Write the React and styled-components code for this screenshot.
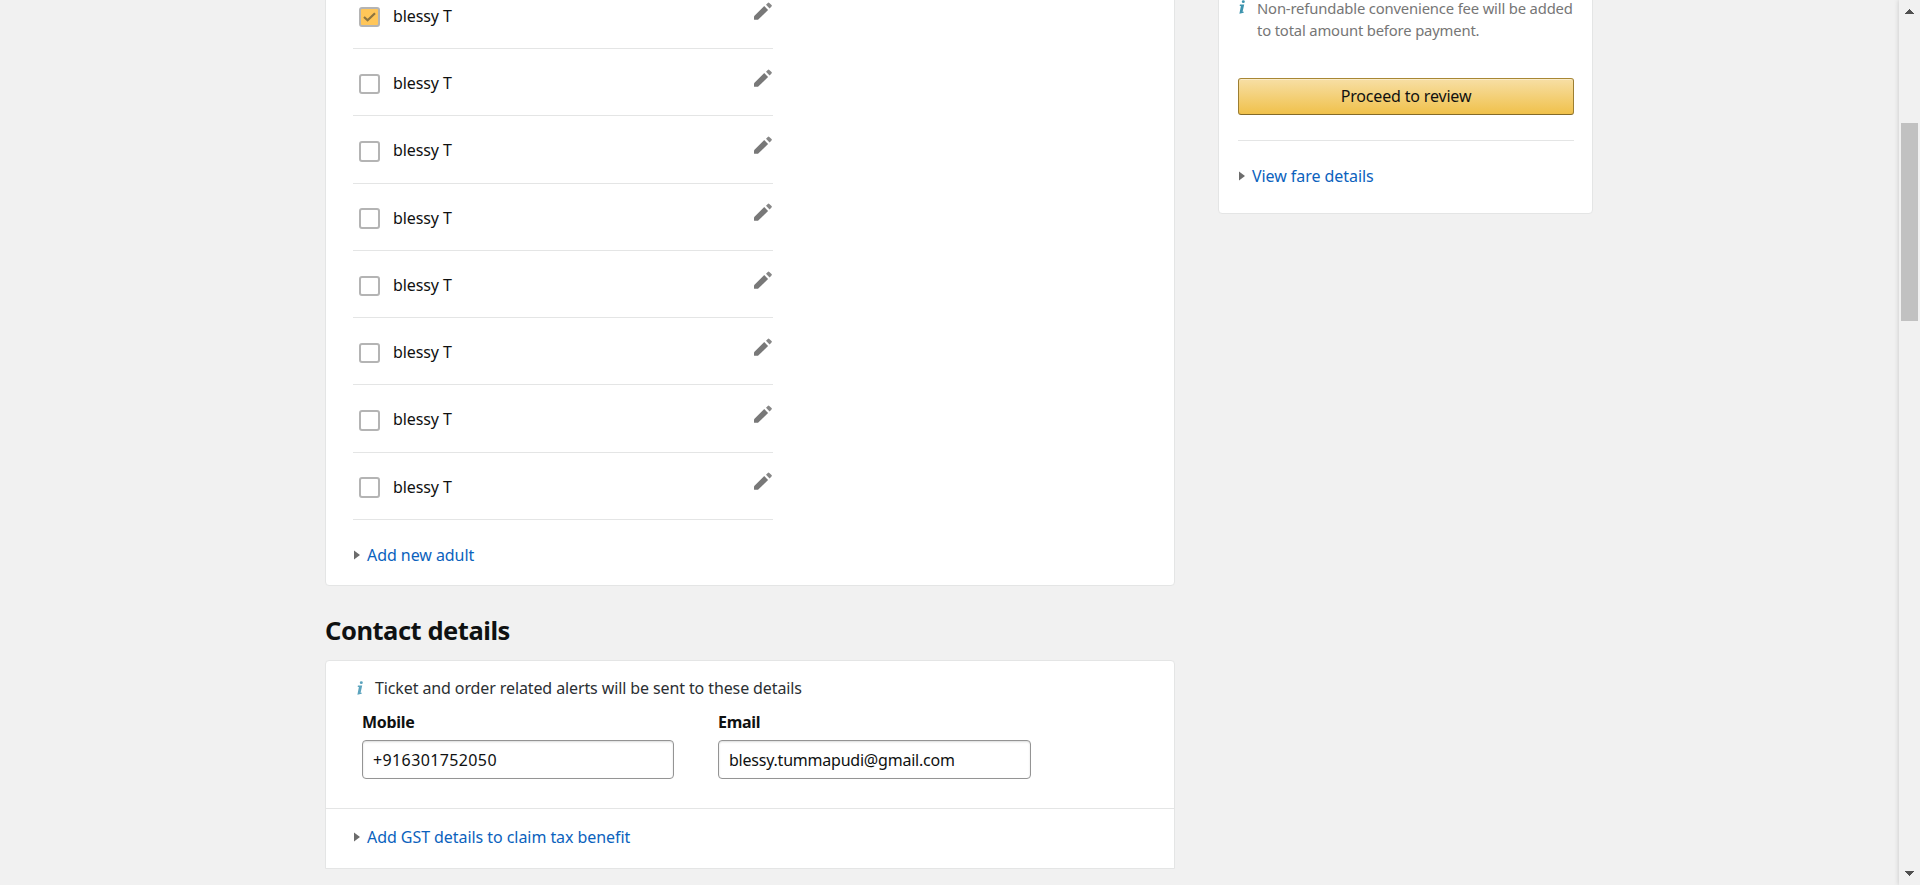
import React from 'react';
import styled, { createGlobalStyle } from 'styled-components';

const Global = createGlobalStyle`
  * { box-sizing: border-box; }
  html, body { margin: 0; height: 100%; overflow: hidden; }
  body {
    background: #f1f1f1;
    color: #0f1111;
    font-family: "Noto Sans", "Open Sans", sans-serif;
    font-size: 16px;
  }
`;

const Page = styled.div`
  display: flex;
  height: 885px;
  overflow: hidden;
`;

const Content = styled.div`
  flex: 1;
  display: flex;
  align-items: flex-start;
  gap: 43px;
  padding-left: 325px;
  overflow: hidden;
`;

const Main = styled.main`
  width: 850px;
  flex: none;
`;

const Card = styled.section`
  background: #fff;
  border: 1px solid #e4e5e5;
  border-radius: ${(p) => p.$radius || '4px'};
`;

const Travellers = styled(Card)`
  height: 605px;
  margin-top: -19px;
  padding-left: 27px;
`;

const List = styled.ul`
  list-style: none;
  margin: -0.06px 0 0;
  padding: 0;
  width: 420px;
`;

const Row = styled.li`
  display: flex;
  align-items: flex-start;
  height: 67.25px;
  border-bottom: 1px solid #e4e5e5;
  padding: 19.6px 1px 0 6px;
`;

const Check = styled.span`
  display: flex;
  align-items: center;
  justify-content: center;
  width: 21px;
  height: 20.5px;
  margin-top: 5px;
  border: 2px solid #b4b4b4;
  border-radius: 3px;
  background: ${(p) => (p.$on ? '#ffc659' : '#fff')};
`;

const Name = styled.span`
  flex: 1;
  margin-left: 13px;
  margin-top: 3.4px;
  line-height: 22px;
  letter-spacing: -0.1px;
`;

const Expander = styled.a`
  display: flex;
  align-items: center;
  gap: 7px;
  padding-left: 1px;
  margin-top: ${(p) => p.$top};
  height: 24px;
  line-height: 24px;
  color: #0b62bd;
  letter-spacing: -0.06px;
  white-space: nowrap;
`;

const Heading = styled.h2`
  margin: 27px 0 0;
  height: 47px;
  font-size: 25.5px;
  font-weight: 700;
  line-height: 34px;
  letter-spacing: -0.46px;
`;

const Contact = styled(Card)`
  height: 209px;
`;

const Fields = styled.div`
  height: 148px;
  border-bottom: 1px solid #e4e5e5;
  padding: 16px 0 0 31px;
`;

const Alert = styled.p`
  display: flex;
  margin: 0;
  height: 24px;
  line-height: 22px;
  white-space: nowrap;
`;

const AlertText = styled.span`
  margin-left: 12px;
  color: #2b2f33;
  letter-spacing: -0.11px;
`;

const FieldRow = styled.div`
  display: flex;
  gap: 44px;
  padding-left: 5px;
  margin-top: 10px;
`;

const Field = styled.label`
  display: flex;
  flex-direction: column;
  width: ${(p) => p.$w};
  font-weight: 700;
  line-height: 22px;
  letter-spacing: -0.3px;
`;

const Input = styled.span`
  height: 39px;
  margin-top: 7px;
  padding-left: 10px;
  line-height: 39px;
  font-weight: 400;
  border: 1px solid #949494;
  border-radius: 4px;
  box-shadow: inset 0 1px 2px rgba(15, 17, 17, 0.15);
  letter-spacing: ${(p) => p.$spacing || '0'};
`;

const GstRow = styled.div`
  padding-left: 27px;
`;

const Summary = styled(Card)`
  width: 375px;
  flex: none;
  height: 234px;
  margin-top: -20px;
  padding: 16px 18px 0 19px;
`;

const Notice = styled.div`
  display: flex;
  height: 81px;
  padding-left: 1px;
  font-size: 14.8px;
  line-height: 22px;
  color: #767676;
  white-space: nowrap;
`;

const NoticeText = styled.div`
  margin-left: 12px;
  letter-spacing: -0.16px;
`;

const Button = styled.button`
  display: block;
  width: 336px;
  height: 37px;
  padding: 0;
  border: 1px solid;
  border-color: #a88734 #9c7e31 #846a29;
  border-radius: 3px;
  background: linear-gradient(#f7dfa5, #f0c14b);
  box-shadow: inset 0 1px 0 rgba(255, 255, 255, 0.4);
  color: #111;
  font: inherit;
  line-height: 35px;
  letter-spacing: -0.17px;
`;

const Rule = styled.hr`
  width: 336px;
  margin: 25px 0 0;
  border: 0;
  border-top: 1px solid #e4e5e5;
`;

const Scrollbar = styled.div`
  display: flex;
  flex-direction: column;
  align-items: center;
  justify-content: space-between;
  width: 21px;
  padding: 9px 0;
  background: #f1f1f1;
  box-shadow: 0 0 5px rgba(0, 0, 0, 0.18);
  position: relative;
`;

const Thumb = styled.div`
  width: 17px;
  height: 198px;
  margin: 109px 0 550px;
  background: #c1c1c1;
`;

const Pencil = () => (
  <svg width="18" height="18" viewBox="0 0 18 18">
    <path d="M0 14.3 10.2 4.1l3.9 3.9L4 17.8H.6Q0 17.8 0 17.2z" fill="#787878" />
    <path d="M12 2.8 13.8.9q.8-.7 1.5 0l2.2 2.2q.7.7 0 1.4l-1.9 1.9z" fill="#878787" />
  </svg>
);

const Tick = () => (
  <svg width="13" height="10" viewBox="0 0 13 10">
    <path d="M1 5 4.6 8.3 12 1.2" fill="none" stroke="#8d7440" strokeWidth="2.2" />
  </svg>
);

const Triangle = () => (
  <svg width="6" height="10" viewBox="0 0 6 10">
    <path d="M0 .5 6 5 0 9.5z" fill="#6c6c6c" />
  </svg>
);

const InfoIcon = ({ color = '#5ba3bd' }) => (
  <svg width="6" height="14" viewBox="0 0 6 14">
    <ellipse cx="4.3" cy="1.7" rx="1.5" ry="1.4" fill={color} />
    <path d="M.9 4.6h4.3L3.6 11.8h1.2l-.2 1-4.2.9L1.9 5.9H.7z" fill={color} />
  </svg>
);

const InfoSlot = styled.span`
  display: flex;
  padding-top: ${(p) => p.$top};
`;

const Arrow = ({ down }) => (
  <svg width="9" height="5" viewBox="0 0 9 5" shapeRendering="crispEdges">
    <path d={down ? 'M0 0h9L4.5 5z' : 'M0 5h9L4.5 0z'} fill="#505050" />
  </svg>
);

const travellers = Array.from({ length: 8 }, (_, i) => ({ id: i, name: 'blessy T', selected: i === 0 }));

export default function App() {
  return (
    <Page>
      <Global />
      <Content>
        <Main>
          <Travellers>
            <List>
              {travellers.map((t) => (
                <Row key={t.id}>
                  <Check $on={t.selected}>{t.selected && <Tick />}</Check>
                  <Name>{t.name}</Name>
                  <Pencil />
                </Row>
              ))}
            </List>
            <Expander $top="23px">
              <Triangle />
              Add new adult
            </Expander>
          </Travellers>
          <Heading>Contact details</Heading>
          <Contact $radius="4px 4px 0 0">
            <Fields>
              <Alert>
                <InfoSlot $top="4px"><InfoIcon /></InfoSlot>
                <AlertText>Ticket and order related alerts will be sent to these details</AlertText>
              </Alert>
              <FieldRow>
                <Field $w="312px">
                  Mobile
                  <Input $spacing="0.38px">+916301752050</Input>
                </Field>
                <Field $w="313px">
                  Email
                  <Input $spacing="-0.22px">blessy.tummapudi@gmail.com</Input>
                </Field>
              </FieldRow>
            </Fields>
            <GstRow>
              <Expander $top="16px">
                <Triangle />
                Add GST details to claim tax benefit
              </Expander>
            </GstRow>
          </Contact>
        </Main>
        <Summary>
          <Notice>
            <InfoSlot $top="3px"><InfoIcon color="#3d94ae" /></InfoSlot>
            <NoticeText>
              Non-refundable convenience fee will be added
              <br />
              to total amount before payment.
            </NoticeText>
          </Notice>
          <Button>Proceed to review</Button>
          <Rule />
          <Expander $top="23px">
            <Triangle />
            View fare details
          </Expander>
        </Summary>
      </Content>
      <Scrollbar>
        <Arrow />
        <Thumb />
        <Arrow down />
      </Scrollbar>
    </Page>
  );
}
